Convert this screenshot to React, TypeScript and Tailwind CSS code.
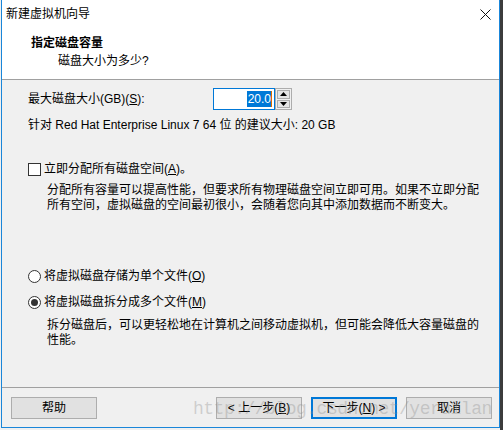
export default function App() {
  return (
    <div className="w-[503px] h-[430px] bg-[#f0f0f0] flex font-['Liberation_Sans','Noto_Sans_CJK_SC',sans-serif] text-[12px] text-black overflow-hidden">
      <div className="w-[1px] shrink-0" />
      <div className="relative w-[499px] h-[428px] shrink-0 border-x border-b border-[#1a86d9] flex flex-col bg-[#f0f0f0]">
        <div className="h-[28px] bg-white flex items-center justify-between pl-[4px] pr-[8px]">
          <span className="leading-[16px]">新建虚拟机向导</span>
          <svg width="11" height="11" viewBox="0 0 11 11">
            <path d="M0.5 0.5 L10.5 10.5 M10.5 0.5 L0.5 10.5" stroke="#111" strokeWidth="1" fill="none" />
          </svg>
        </div>
        <div className="h-[52px] bg-white border-b border-[#a0a0a0] pt-[7px]">
          <div className="pl-[29px] font-bold leading-[16px]">指定磁盘容量</div>
          <div className="pl-[56px] leading-[16px] mt-[2px]">磁盘大小为多少?</div>
        </div>
        <div className="flex-1 pl-[26px] pt-[8px]">
          <div className="flex items-center h-[22px]">
            <div className="w-[185px] leading-[16px]">
              最大磁盘大小(GB)(<u>S</u>):
            </div>
            <div className="w-[62px] h-[22px] border border-[#0078d7] bg-white flex items-center justify-end pr-[2px]">
              <span className="bg-[#0078d7] text-white leading-[16px] pl-[1px]">20.0</span>
              <span className="w-[1px] h-[16px] bg-[#e06c00]" />
            </div>
            <div className="w-[17px] h-[22px] border border-[#adadad] bg-[#f0f0f0] p-[1px] flex flex-col gap-[1px]">
              <div className="flex-1 border border-[#adadad] bg-[#e5e5e5] flex items-center justify-center">
                <svg width="7" height="4" viewBox="0 0 7 4"><path d="M3.5 0 L7 4 L0 4 Z" fill="#000" /></svg>
              </div>
              <div className="flex-1 border border-[#adadad] bg-[#e5e5e5] flex items-center justify-center">
                <svg width="7" height="4" viewBox="0 0 7 4"><path d="M0 0 L7 0 L3.5 4 Z" fill="#000" /></svg>
              </div>
            </div>
          </div>
          <div className="mt-[7px] leading-[16px]">针对 Red Hat Enterprise Linux 7 64 位 的建议大小: 20 GB</div>
          <div className="mt-[28px] h-[16px] flex items-center">
            <div className="w-[13px] h-[13px] border border-[#333] bg-white mr-[3px]" />
            <span className="leading-[16px]">立即分配所有磁盘空间(<u>A</u>)。</span>
          </div>
          <div className="mt-[6px] pl-[19px] leading-[15px] whitespace-nowrap">
            分配所有容量可以提高性能，但要求所有物理磁盘空间立即可用。如果不立即分配
            <br />
            所有空间，虚拟磁盘的空间最初很小，会随着您向其中添加数据而不断变大。
          </div>
          <div className="mt-[55px] h-[16px] flex items-center">
            <div className="w-[13px] h-[13px] rounded-full border border-[#333] bg-white mr-[3px]" />
            <span className="leading-[16px]">将虚拟磁盘存储为单个文件(<u>O</u>)</span>
          </div>
          <div className="mt-[10px] h-[16px] flex items-center">
            <div className="w-[13px] h-[13px] rounded-full border border-[#333] bg-white mr-[3px] flex items-center justify-center">
              <div className="w-[7px] h-[7px] rounded-full bg-[#333]" />
            </div>
            <span className="leading-[16px]">将虚拟磁盘拆分成多个文件(<u>M</u>)</span>
          </div>
          <div className="mt-[8px] pl-[19px] leading-[15px] whitespace-nowrap">
            拆分磁盘后，可以更轻松地在计算机之间移动虚拟机，但可能会降低大容量磁盘的
            <br />
            性能。
          </div>
        </div>
        <div className="h-[40px] border-t border-[#a0a0a0] flex items-start pt-[9px] pl-[9px]">
          <button className="w-[86px] h-[22px] bg-[#e1e1e1] border border-[#adadad] leading-[16px]">帮助</button>
          <button className="ml-[119px] w-[86px] h-[22px] bg-[#e1e1e1] border border-[#adadad] leading-[16px]">
            &lt; 上一步(<u>B</u>)
          </button>
          <button className="ml-[9px] w-[86px] h-[22px] bg-[#e1e1e1] border-2 border-[#0078d7] leading-[16px]">
            下一步(<u>N</u>) &gt;
          </button>
          <button className="ml-[9px] w-[86px] h-[22px] bg-[#e1e1e1] border border-[#adadad] leading-[16px]">取消</button>
        </div>
        <div className="absolute left-[191px] top-[398px] font-['Liberation_Mono',monospace] text-[18px] tracking-[-0.5px] leading-[22px] text-[rgba(140,140,140,0.35)] pointer-events-none whitespace-nowrap">
          http://blog.csdn.net/yeruilan
        </div>
      </div>
      <div className="flex-1 bg-[#3c3c3c]" />
    </div>
  );
}
